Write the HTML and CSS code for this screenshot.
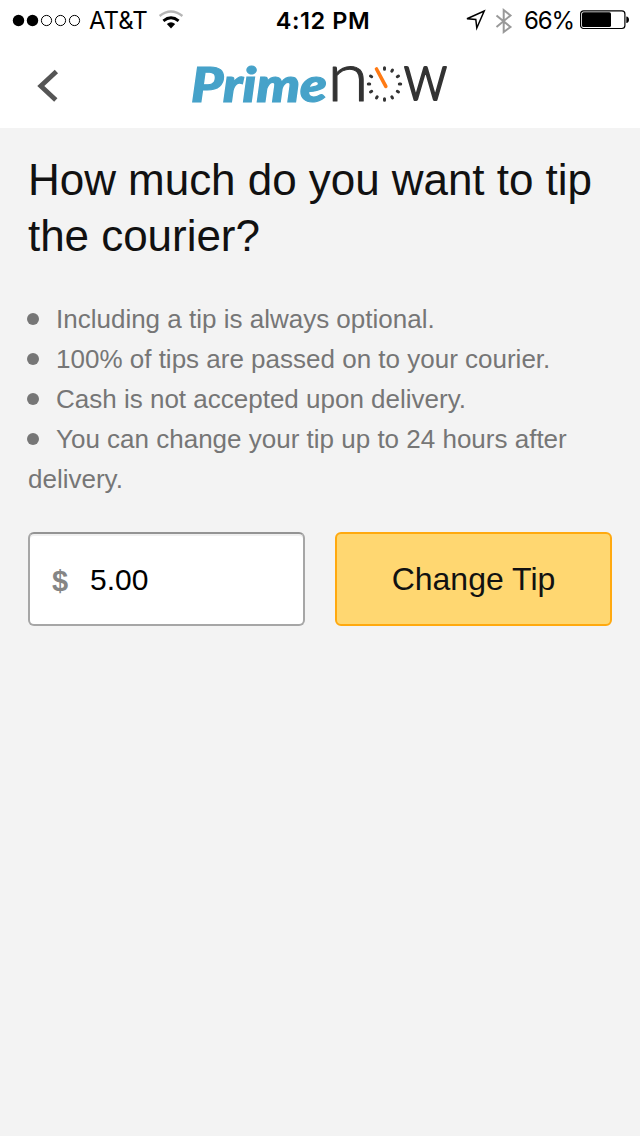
FILE: index.html
```html
<!DOCTYPE html>
<html lang="en">
<head>
    <meta charset="UTF-8">
    <meta name="viewport" content="width=device-width, initial-scale=1.0">
    <title>Change Tip</title>
    <link rel="stylesheet" href="styles.css">
</head>
<body>
    <div class="statusBar">
        <div class="statusLeft">
            <svg class="signal" width="70" height="14" viewBox="0 0 70 14">
                <circle cx="6.5" cy="7.5" r="5.7" fill="#000"/>
                <circle cx="20.5" cy="7.5" r="5.7" fill="#000"/>
                <circle cx="34.5" cy="7.5" r="5.1" fill="none" stroke="#000"/>
                <circle cx="48.5" cy="7.5" r="5.1" fill="none" stroke="#000"/>
                <circle cx="62.5" cy="7.5" r="5.1" fill="none" stroke="#000"/>
            </svg>
            <span class="carrier">AT&amp;T</span>
            <svg class="wifi" width="26" height="20" viewBox="0 0 26 20">
                <path d="M1.6 6Q13 -3 24.4 6" fill="none" stroke="#b5b5b5" stroke-width="2.4"/>
                <path d="M5.4 10.8Q13 4.6 20.6 10.8" fill="none" stroke="#000" stroke-width="2.8"/>
                <path d="M8.8 14Q13 10.6 17.2 14L13 18.5Z" fill="#000"/>
            </svg>
        </div>
        <div class="clock">4:12 PM</div>
        <div class="statusRight">
            <svg class="location" width="22" height="22" viewBox="0 0 22 22">
                <path d="M2 9.8L19.2 2L11.8 19L10.8 10.4Z" fill="none" stroke="#000" stroke-width="1.5"/>
            </svg>
            <svg class="bluetooth" width="18" height="28" viewBox="0 0 18 28">
                <path d="M1.5 8.4L15.5 20L8.7 25V3L15.5 8.4L1.5 20" fill="none" stroke="#999" stroke-width="2"/>
            </svg>
            <span class="percent">66%</span>
            <svg class="battery" width="50" height="20" viewBox="0 0 50 20">
                <rect x="0.6" y="0.9" width="44.3" height="17.6" rx="3" fill="#fff" stroke="#000" stroke-width="1.2"/>
                <rect x="2" y="2.3" width="29" height="14.8" rx="1.6" fill="#000"/>
                <path d="M46.3 6.4Q49 6.8 49 9.7Q49 12.6 46.3 13Z" fill="#000"/>
            </svg>
        </div>
    </div>

    <div class="navBar">
        <svg class="back" width="24" height="36" viewBox="0 0 24 36">
            <path d="M20.4 3.5L4.8 18L19.8 32" fill="none" stroke="#555" stroke-width="4.8"/>
        </svg>
        <svg class="logo" width="272" height="114" viewBox="0 -32 272 114">
            <text class="prime" x="3" y="42.5" textLength="136" lengthAdjust="spacingAndGlyphs">Prime</text>
            <text class="now" x="139" y="41.5" textLength="42" lengthAdjust="spacingAndGlyphs">n</text>
            <!-- clock dial used as the letter o -->
            <g transform="translate(196.5 25)" stroke="#333" stroke-width="3" stroke-linecap="round">
                <path d="M0 -14.8V-16.2M7.3 -12.8L8 -14M12.8 -7.3L14 -8M14.8 0H16.2M12.8 7.3L14 8M7.3 12.8L8 14M0 14.8V16.2M-7.3 12.8L-8 14M-12.8 7.3L-14 8M-14.8 0H-16.2M-12.8 -7.3L-14 -8"/>
                <path d="M-8 -15L1.3 2.3" stroke="#ff7a14" stroke-width="3.6"/>
            </g>
            <text class="now wide" x="215.5" y="41" textLength="44" lengthAdjust="spacingAndGlyphs">w</text>
        </svg>
    </div>

    <div class="content">
        <h1>How much do you want to tip the courier?</h1>
        <ul class="notes">
            <li>Including a tip is always optional.</li>
            <li>100% of tips are passed on to your courier.</li>
            <li>Cash is not accepted upon delivery.</li>
            <li>You can change your tip up to 24 hours after delivery.</li>
        </ul>
        <div class="tipForm">
            <div class="amount">
                <span class="currency">$</span>
                <span class="value">5.00</span>
            </div>
            <button class="changeTip">Change Tip</button>
        </div>
    </div>
</body>
</html>
```
FILE: styles.css
```css
* {
    box-sizing: border-box;
}

body {
    margin: 0;
    height: 1136px;
    background-color: #f3f3f3;
    font-family: "Liberation Sans", Arial, sans-serif;
    color: #111;
}

svg {
    display: block;
    flex: none;
}

.statusBar {
    display: grid;
    grid-template-columns: 1fr auto 1fr;
    align-items: center;
    height: 40px;
    padding: 0 10px 0 12px;
    background-color: #fff;
    font-family: Inter, sans-serif;
    color: #000;
}

.statusLeft,
.statusRight {
    display: flex;
    align-items: center;
}

.statusRight {
    justify-content: flex-end;
}

.carrier {
    margin: 1px 0 0 7px;
    font-size: 24px;
}

.wifi {
    margin-left: 10px;
}

.clock {
    margin: 1px -4px 0 0;
    font-weight: 600;
    font-size: 23.5px;
    letter-spacing: 0.6px;
}

.location {
    margin-right: 8px;
}

.bluetooth {
    margin: 2px 11px 0 0;
}

.percent {
    margin: 1px 6px 0 0;
    font-size: 24px;
    letter-spacing: -1.1px;
}

.navBar {
    display: flex;
    align-items: center;
    height: 88px;
    padding: 0 36px;
    background-color: #fff;
}

.back {
    margin-top: 4px;
}

.logo {
    margin: -1px 0 0 128px;
    overflow: visible;
}

.prime {
    font-family: Lato, sans-serif;
    font-weight: 900;
    font-style: italic;
    font-size: 47px;
    fill: #46a2c9;
    stroke: #46a2c9;
    stroke-width: 1.2px;
}

.now {
    font-family: Lato, sans-serif;
    font-weight: 300;
    font-size: 68px;
    fill: #333;
    stroke: #333;
    stroke-width: 1px;
    stroke-linejoin: round;
}

.now.wide {
    font-size: 67px;
    stroke-width: 2.2px;
}

.content {
    padding: 24px 28px;
}

h1 {
    margin: 0;
    font-size: 44px;
    font-weight: normal;
    line-height: 56px;
    letter-spacing: -0.04px;
}

.notes {
    margin: 35px 0 33px;
    padding: 0;
    list-style: none;
    font-size: 26px;
    line-height: 40px;
    color: #767676;
}

.notes li::before {
    content: "";
    display: inline-block;
    width: 12px;
    height: 12px;
    margin: 0 17px 0 -1px;
    border-radius: 50%;
    background-color: #767676;
    vertical-align: 3px;
}

.tipForm {
    display: flex;
    gap: 30px;
}

.amount,
.changeTip {
    width: 277px;
    height: 94px;
    border: 2px solid #a6a6a6;
    border-radius: 6px;
}

.amount {
    display: flex;
    align-items: center;
    padding-left: 22px;
    border-top-color: #949494;
    background-color: #fff;
    box-shadow: inset 0 2px 0 #f0f0f0;
    color: #000;
}

.currency {
    width: 38px;
    padding-top: 4px;
    font-size: 29px;
    font-weight: bold;
    color: #858585;
}

.value {
    padding-top: 1px;
    font-size: 30px;
}

.changeTip {
    padding: 0;
    border-color: #ffa90f;
    background-color: #ffd771;
    font-family: inherit;
    font-size: 32px;
    color: #111;
}
```
